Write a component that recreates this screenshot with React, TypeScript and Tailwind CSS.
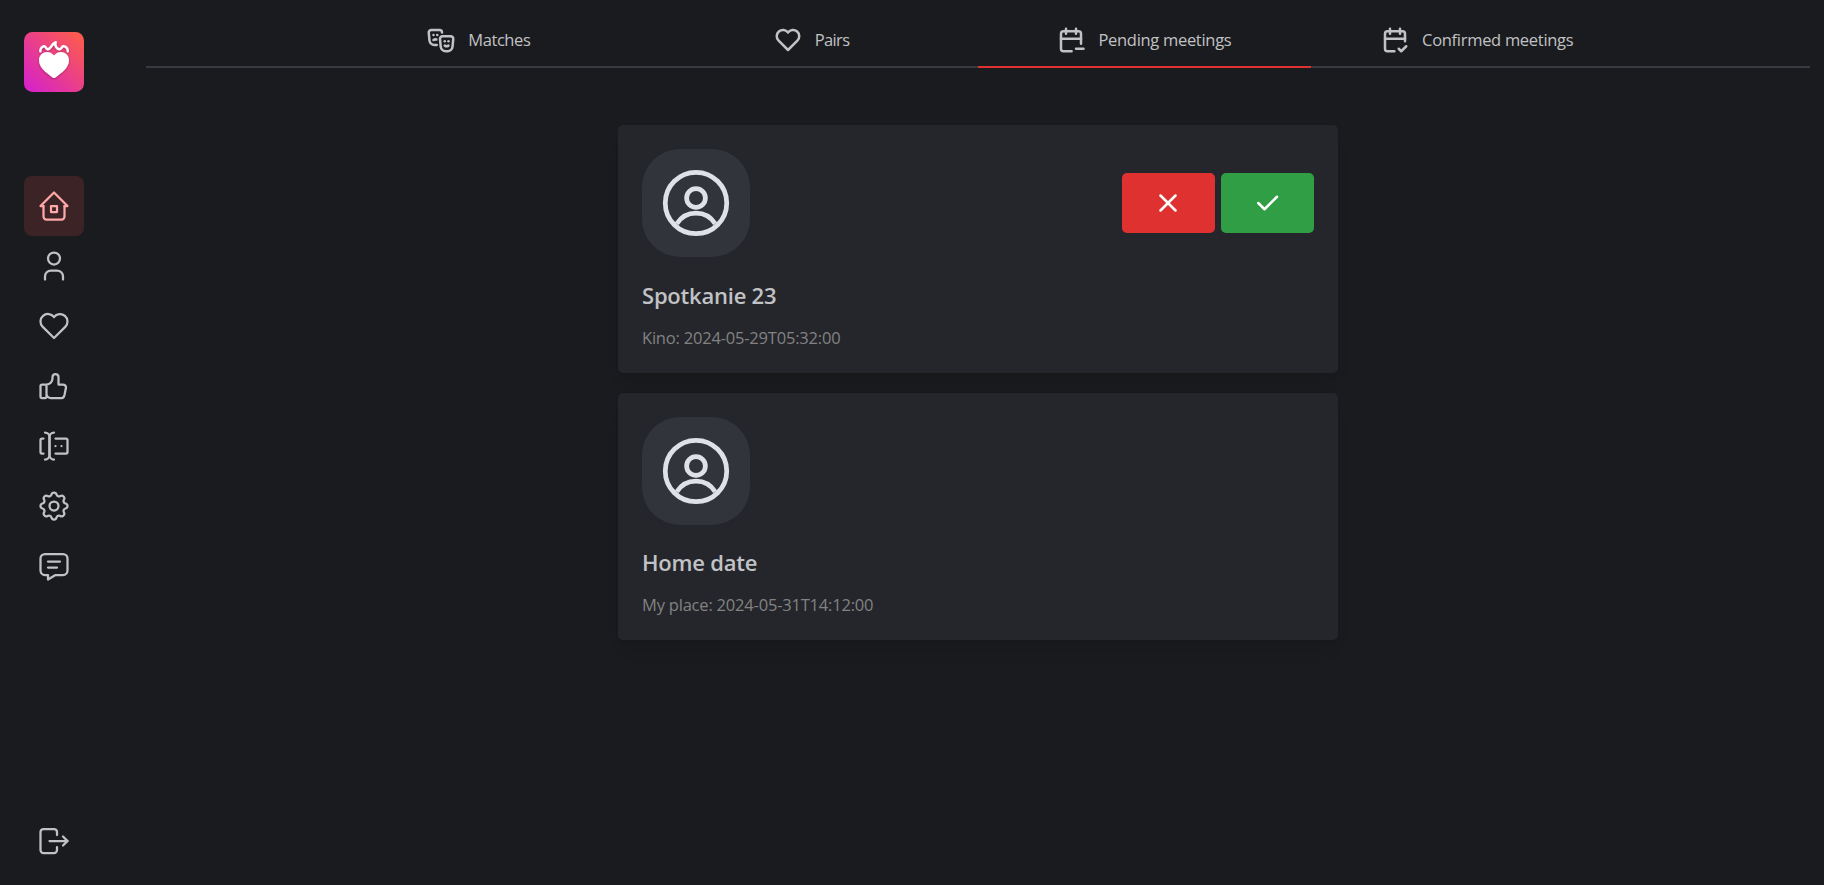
import React from "react";
import {
  TbHome2, TbUser, TbHeart, TbThumbUp, TbForms, TbSettings, TbMessage, TbLogout,
  TbMasksTheater, TbCalendarMinus, TbCalendarCheck, TbX, TbCheck,
} from "react-icons/tb";

const navItems = [
  { icon: TbHome2, active: true },
  { icon: TbUser },
  { icon: TbHeart },
  { icon: TbThumbUp },
  { icon: TbForms },
  { icon: TbSettings },
  { icon: TbMessage },
];

const tabs = [
  { icon: TbMasksTheater, label: "Matches", text: "tracking-[-0.43px]" },
  { icon: TbHeart, label: "Pairs", text: "tracking-[-0.6px]" },
  { icon: TbCalendarMinus, label: "Pending meetings", text: "tracking-[-0.3px]", active: true },
  { icon: TbCalendarCheck, label: "Confirmed meetings", text: "tracking-[-0.3px]" },
];

const meetings = [
  { title: "Spotkanie 23", place: "Kino: 2024-05-29T05:32:00", actions: true },
  { title: "Home date", place: "My place: 2024-05-31T14:12:00", actions: false },
];

function Logo() {
  return (
    <svg viewBox="0 0 60 60" className="size-[60px]">
      <defs>
        <linearGradient id="logo-bg" x1="0" y1="1" x2="1" y2="0">
          <stop offset="0" stopColor="#d41fd0" />
          <stop offset="1" stopColor="#ff5f45" />
        </linearGradient>
        <filter id="logo-shadow" x="-20%" y="-20%" width="140%" height="150%">
          <feDropShadow dx="0" dy="1" stdDeviation="0.8" floodColor="#5a0a3c" floodOpacity="0.45" />
        </filter>
      </defs>
      <rect width="60" height="60" rx="8.5" fill="url(#logo-bg)" />
      <g filter="url(#logo-shadow)">
        <path
          d="M30 23.6C32 21 34.400 20 37 20C41.700 20 45 23.700 45 28.300C45 32.700 42.600 36.200 39 39.500L31.500 45.500Q30 46.600 28.500 45.500L21 39.500C17.400 36.200 15 32.700 15 28.300C15 23.700 18.300 20 23 20C25.600 20 28 21 30 23.600Z"
          fill="#fff"
        />
        <path
          d="M16.300 19.300C16.300 16.300 18.300 13.900 20.700 14.300C22.200 14.700 21.800 17.100 23.600 17.200C27.300 17.200 26.600 12.200 31.800 10.200C30.400 13.200 32.600 17.200 35.600 17.200C38 17.200 37.400 14.500 39.300 14.300C42 14.100 43.800 16.300 43.800 19.300"
          fill="none" stroke="#fff" strokeWidth="2.400" strokeLinecap="round" strokeLinejoin="round"
        />
      </g>
    </svg>
  );
}

function AvatarIcon() {
  return (
    <svg viewBox="-0.1 -0.1 15.2 15.2" fill="none" stroke="#dee2e6" strokeWidth="0.95" className="size-[76px]">
      <circle cx="7.5" cy="7.5" r="6.148" />
      <circle cx="7.5" cy="6.505" r="1.875" />
      <path d="M3.66 11.65C4.450 10.350 5.870 9.500 7.500 9.500C9.130 9.500 10.550 10.350 11.340 11.650" />
    </svg>
  );
}

export default function App() {
  return (
    <div className="flex h-[885px] bg-[#1a1b1e] font-['Open_Sans','Noto_Sans',sans-serif] text-[#c1c2c5]">
      <nav className="flex w-[108px] flex-col items-center pt-8 pb-[14px]">
        <Logo />
        <div className="mt-[84px] flex flex-col">
          {navItems.map(({ icon: Icon, active }, i) => (
            <button
              key={i}
              className={`flex size-[60px] items-center justify-center rounded-[8px] ${active ? "bg-[#3b2326] text-[#ffa8a8]" : ""}`}
            >
              <Icon size={36} strokeWidth={1.5} />
            </button>
          ))}
        </div>
        <button className="mt-auto flex size-[60px] items-center justify-center">
          <TbLogout size={36} strokeWidth={1.5} />
        </button>
      </nav>
      <main className="flex flex-1 flex-col pr-[14px] pl-[38px] pt-3">
        <div className="flex h-14 justify-center bg-[linear-gradient(#373a40,#373a40)] bg-[length:100%_2px] bg-bottom bg-no-repeat">
          {tabs.map(({ icon: Icon, label, text, active }) => (
            <button
              key={label}
              className={`flex w-1/5 items-center justify-center gap-3 border-b-2 pt-0.5 pr-px ${active ? "border-[#e03131]" : "border-transparent"}`}
            >
              <Icon size={30} />
              <span className={`text-[16.5px] whitespace-nowrap ${text}`}>{label}</span>
            </button>
          ))}
        </div>
        <div className="mx-auto mt-[56.9px] flex w-[720px] flex-col gap-5">
          {meetings.map((m) => (
            <section
              key={m.title}
              className="flex h-[247.8px] flex-col rounded-[5px] bg-[#25262b] p-6 shadow-[0_1px_3px_rgba(0,0,0,0.05),0_15px_23px_-7px_rgba(0,0,0,0.05),0_10px_10px_-7px_rgba(0,0,0,0.04)]"
            >
              <div className="flex items-center justify-between">
                <div className="flex size-[108px] items-center justify-center rounded-[38px] bg-[#31343b]">
                  <AvatarIcon />
                </div>
                {m.actions && (
                  <div className="flex gap-1.5 text-white">
                    <button className="flex h-[60px] w-[93px] items-center justify-center rounded-[5px] bg-[#e03131] pr-px">
                      <TbX size={30} />
                    </button>
                    <button className="flex h-[60px] w-[93px] items-center justify-center rounded-[5px] bg-[#2f9e44] pr-px">
                      <TbCheck size={30} />
                    </button>
                  </div>
                )}
              </div>
              <h2 className="mt-[21.7px] text-[22px] leading-8 font-semibold tracking-[-0.22px]">{m.title}</h2>
              <p className="mt-[15px] text-[16.5px] leading-6 tracking-[-0.2px] text-[#828282]">{m.place}</p>
            </section>
          ))}
        </div>
      </main>
    </div>
  );
}
